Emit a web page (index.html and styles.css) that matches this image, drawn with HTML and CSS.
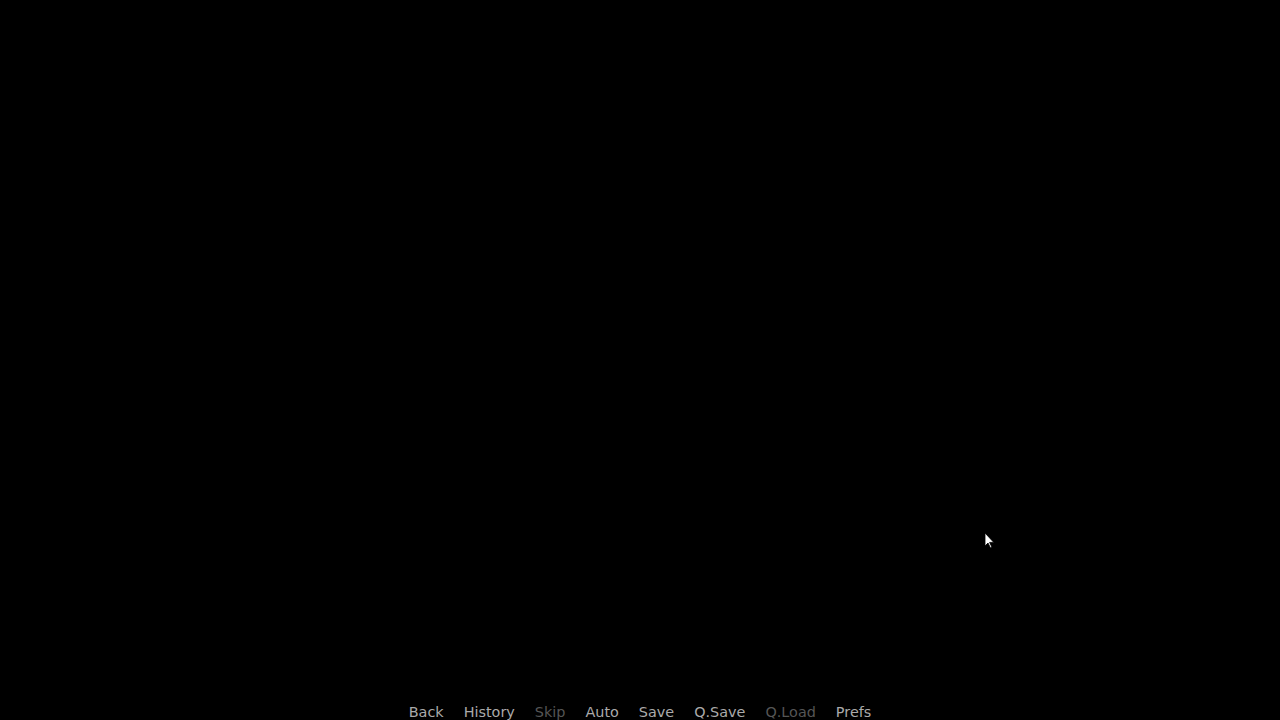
FILE: index.html
```html
<!DOCTYPE html>
<html>
<head>
<meta charset="utf-8">
<link rel="stylesheet" href="styles.css">
</head>
<body>
<div class="screen">
  <div class="stage"></div>
  <nav class="quick-menu">
    <span class="qbtn">Back</span>
    <span class="qbtn">History</span>
    <span class="qbtn off">Skip</span>
    <span class="qbtn">Auto</span>
    <span class="qbtn">Save</span>
    <span class="qbtn">Q.Save</span>
    <span class="qbtn off">Q.Load</span>
    <span class="qbtn">Prefs</span>
  </nav>
  <svg class="cursor" width="12" height="18" viewBox="0 0 12 18"><path d="M1 1 L1 14 L4 11 L6.5 16 L8 15.3 L5.6 10.4 L9.8 10.4 Z" fill="#fff" stroke="#000" stroke-width="0.8"/></svg>
</div>
</body>
</html>
```
FILE: styles.css
```css
html, body {
  margin: 0;
  padding: 0;
  background: #000;
  overflow: hidden;
}
.screen {
  position: relative;
  width: 1280px;
  height: 720px;
  display: flex;
  flex-direction: column;
  background: #000;
  overflow: hidden;
}
.stage {
  flex: 1;
}
.quick-menu {
  display: flex;
  justify-content: center;
  gap: 20px;
  height: 17px;
  margin-bottom: -1px;
  font-family: "DejaVu Sans", sans-serif;
  font-size: 14.4px;
  line-height: 17px;
}
.qbtn {
  color: #aaaaaa;
  white-space: nowrap;
}
.qbtn.off {
  color: #555;
}
.cursor {
  position: absolute;
  left: 984px;
  top: 532px;
}
```
